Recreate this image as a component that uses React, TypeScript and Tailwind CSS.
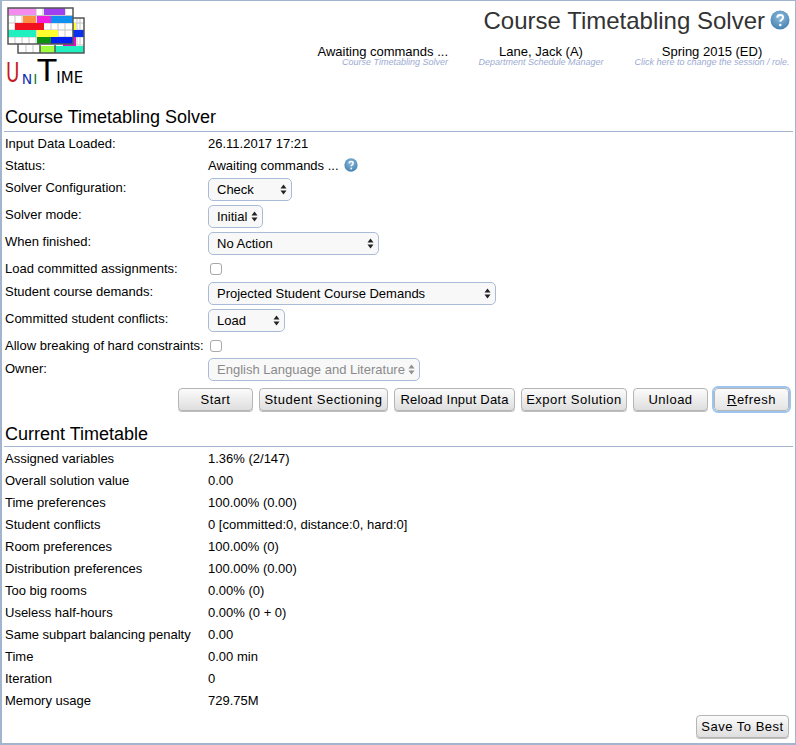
import React, { PropsWithChildren } from "react";

const backBlocks: [number, number, number, number, string][] = [
  [73, 23, 3, 7, "#ffff30"],
  [73, 30, 11, 7, "#0a30f0"],
  [63, 37, 13, 9, "#e010c8"],
];

const frontBlocks: [number, number, number, number, string][] = [
  [8, 8, 28, 7, "#f48cf0"],
  [44, 8, 21, 7, "#a040f0"],
  [23, 16, 13, 7, "#ff9040"],
  [37, 16, 14, 7, "#f020e0"],
  [51, 16, 22, 7, "#1090f0"],
  [15, 23, 29, 7, "#f01020"],
  [8, 30, 28, 7, "#20f0c0"],
  [37, 30, 21, 7, "#ffff30"],
  [37, 37, 14, 7, "#109010"],
  [51, 37, 22, 7, "#0020f0"],
];

const lowerBlocks: [number, number, number, number, string][] = [
  [40, 46, 15, 7, "#a0ff40"],
  [55, 46, 29, 7, "#20f0c0"],
];

function Logo() {
  return (
    <div className="flex w-[82px] flex-col">
      <svg width="82" height="56" viewBox="6 6 82 56" className="block">
        <rect x="18" y="18" width="66" height="35" fill="#fff" />
        <path d="M73 23H84M73 30H84M73 37H84M73 45H84M77 18V45M80 18V45M26 45V53M33 45V53" stroke="#c4c4c4" strokeWidth="1" fill="none" />
        {backBlocks.map(([x, y, w, h, fill], index) => (
          <rect key={index} x={x} y={y} width={w} height={h} fill={fill} />
        ))}
        {lowerBlocks.map(([x, y, w, h, fill], index) => (
          <rect key={index} x={x} y={y} width={w} height={h} fill={fill} />
        ))}
        <path d="M18 44V53H84V18H73M40 45V53M55 45V53" stroke="#555" strokeWidth="1.5" fill="none" />
        <rect x="8" y="8" width="65" height="36" fill="#fff" />
        <path d="M8 15.5H73M8 23H73M8 30H73M8 37H73M15 8V44M22 8V44M29 8V44M36 8V44M43 8V44M51 8V44M58 8V44M65 8V44" stroke="#c4c4c4" strokeWidth="1" fill="none" />
        {frontBlocks.map(([x, y, w, h, fill], index) => (
          <rect key={index} x={x} y={y} width={w} height={h} fill={fill} />
        ))}
        <rect x="8" y="8" width="65" height="36" fill="none" stroke="#555" strokeWidth="1.5" />
      </svg>
      <div className="mt-[-1px] flex h-[25px] items-end font-['DejaVu_Sans',sans-serif] leading-none text-black">
        <span className="mr-[-6px] inline-block origin-left scale-x-[0.68] text-[27px] text-[#c81820]">U</span>
        <span className="ml-[2px] text-[14px] text-[#1030b0]">N</span>
        <span className="ml-[1px] text-[14px] text-[#108030]">I</span>
        <span className="text-[31px]">T</span>
        <span className="text-[15px]">IME</span>
      </div>
    </div>
  );
}

function HelpIcon({ size }: { size: "lg" | "sm" }) {
  const box = size === "lg" ? "h-[20px] w-[20px]" : "h-[14px] w-[14px]";
  return (
    <svg viewBox="0 0 20 20" className={box}>
      <defs>
        <radialGradient id={`help-${size}`} cx="50%" cy="35%" r="70%">
          <stop offset="0%" stopColor="#8fbbdc" />
          <stop offset="100%" stopColor="#3f7fae" />
        </radialGradient>
      </defs>
      <circle cx="10" cy="10" r="9.5" fill={`url(#help-${size})`} />
      <path d="M7.2 7.6c.2-1.7 1.4-2.6 3-2.6 1.7 0 2.9 1 2.9 2.4 0 1.2-.7 1.8-1.5 2.4-.8.6-1.3 1-1.3 2" fill="none" stroke="#fff" strokeWidth="2" />
      <circle cx="10.3" cy="15" r="1.3" fill="#fff" />
    </svg>
  );
}

function HeaderInfo({ title, sub, align }: { title: string; sub: string; align: string }) {
  return (
    <div className={`flex flex-col ${align}`}>
      <div className="whitespace-nowrap text-[13px] leading-[12px] text-black">{title}</div>
      <div className="whitespace-nowrap text-[9px] italic leading-[8px] text-[#9dabd2]">{sub}</div>
    </div>
  );
}

function SectionTitle({ children, pad }: PropsWithChildren<{ pad: string }>) {
  return (
    <div className={`ml-[2px] mr-[2px] border-b border-[#a3b4cf] ${pad} pl-[1px] text-[18px] leading-[21px] text-black`}>
      {children}
    </div>
  );
}

function Row({ label, height, children, top = "pt-[3px]" }: PropsWithChildren<{ label: string; height: string; top?: string }>) {
  return (
    <div className={`flex ${height}`}>
      <div className="w-[203px] shrink-0 pt-[3px] leading-[15px]">{label}</div>
      <div className={`flex items-start ${top} leading-[15px]`}>{children}</div>
    </div>
  );
}

function Select({ value, width, disabled }: { value: string; width: string; disabled?: boolean }) {
  return (
    <div className={`relative ${width}`}>
      <select
        disabled={disabled}
        defaultValue={value}
        className={`h-[23px] w-full appearance-none rounded-[5px] border border-[#a9bbd6] bg-[#f8f8f8] pl-[8px] text-[13px] leading-[15px] ${disabled ? "text-[#8a8a8a]" : "text-black"}`}
      >
        <option>{value}</option>
      </select>
      <svg viewBox="0 0 7 11" className="absolute right-[5px] top-[6px] h-[11px] w-[7px]">
        <path d="M3.5 0.5L6.5 4.5H0.5ZM3.5 10.5L0.5 6.5H6.5Z" fill={disabled ? "#909090" : "#222"} />
      </svg>
    </div>
  );
}

function Checkbox() {
  return <input type="checkbox" className="ml-[2px] mt-[2px] h-[12px] w-[12px] appearance-none rounded-[3px] border border-[#a8a8a8] bg-white" />;
}

function Btn({ children, width, tracking = "tracking-[0.5px]" }: PropsWithChildren<{ width: string; tracking?: string }>) {
  return (
    <button className={`h-[23px] ${width} rounded-[4px] border border-[#b5b5b5] bg-gradient-to-b from-[#fbfbfb] to-[#dedede] text-center text-[13px] leading-[15px] ${tracking} text-black shadow-[0_1px_0_#bdbdbd]`}>
      {children}
    </button>
  );
}

const stats = [
  ["Assigned variables", "1.36% (2/147)"],
  ["Overall solution value", "0.00"],
  ["Time preferences", "100.00% (0.00)"],
  ["Student conflicts", "0 [committed:0, distance:0, hard:0]"],
  ["Room preferences", "100.00% (0)"],
  ["Distribution preferences", "100.00% (0.00)"],
  ["Too big rooms", "0.00% (0)"],
  ["Useless half-hours", "0.00% (0 + 0)"],
  ["Same subpart balancing penalty", "0.00"],
  ["Time", "0.00 min"],
  ["Iteration", "0"],
  ["Memory usage", "729.75M"],
];

export default function App() {
  return (
    <div className="flex h-[745px] w-[796px] flex-col overflow-hidden border-b-2 border-l-2 border-r border-t border-[#a3b4cf] bg-white font-['Liberation_Sans',sans-serif] text-[13px] text-black">
      <div className="flex h-[92px] shrink-0 justify-between pl-[4px] pr-[5px] pt-[5px]">
        <Logo />
        <div className="flex flex-col items-end">
          <div className="mt-[2px] flex h-[26px] items-center gap-[5px]">
            <span className="text-[24px] leading-[26px] text-[#333]">Course Timetabling Solver</span>
            <span className="mt-[-3px]"><HelpIcon size="lg" /></span>
          </div>
          <div className="mt-[12px] flex gap-[30px]">
            <div className="w-[132px]"><HeaderInfo title="Awaiting commands ..." sub="Course Timetabling Solver" align="items-end" /></div>
            <div className="w-[126px]"><HeaderInfo title="Lane, Jack (A)" sub="Department Schedule Manager" align="items-center" /></div>
            <div className="w-[156px]"><HeaderInfo title="Spring 2015 (ED)" sub="Click here to change the session / role." align="items-center" /></div>
          </div>
        </div>
      </div>
      <div className="shrink-0 pt-[14px]">
        <SectionTitle pad="pb-[3px]">Course Timetabling Solver</SectionTitle>
      </div>
      <div className="pl-[3px] pt-[1px]">
        <Row label="Input Data Loaded:" height="h-[22px]">26.11.2017 17:21</Row>
        <Row label="Status:" height="h-[22px]">
          <span>Awaiting commands ...</span>
          <span className="ml-[5px]"><HelpIcon size="sm" /></span>
        </Row>
        <Row label="Solver Configuration:" height="h-[27px]" top="pt-[1px]"><Select value="Check" width="w-[84px]" /></Row>
        <Row label="Solver mode:" height="h-[27px]" top="pt-[1px]"><Select value="Initial" width="w-[55px]" /></Row>
        <Row label="When finished:" height="h-[27px]" top="pt-[1px]"><Select value="No Action" width="w-[171px]" /></Row>
        <Row label="Load committed assignments:" height="h-[23px]"><Checkbox /></Row>
        <Row label="Student course demands:" height="h-[27px]" top="pt-[1px]"><Select value="Projected Student Course Demands" width="w-[288px]" /></Row>
        <Row label="Committed student conflicts:" height="h-[27px]" top="pt-[1px]"><Select value="Load" width="w-[77px]" /></Row>
        <Row label="Allow breaking of hard constraints:" height="h-[23px]"><Checkbox /></Row>
        <Row label="Owner:" height="h-[27px]" top="pt-0"><Select value="English Language and Literature" width="w-[212px]" disabled /></Row>
      </div>
      <div className="flex justify-end gap-[6px] pr-[6px] pt-[3px]">
        <Btn width="w-[75px]">Start</Btn>
        <Btn width="w-[129px]">Student Sectioning</Btn>
        <Btn width="w-[121px]" tracking="tracking-[0.2px]">Reload Input Data</Btn>
        <Btn width="w-[106px]">Export Solution</Btn>
        <Btn width="w-[75px]">Unload</Btn>
        <button className="h-[23px] w-[75px] rounded-[4px] border border-[#b5b5b5] bg-gradient-to-b from-[#fbfbfb] to-[#e4e4e4] text-center text-[13px] leading-[15px] tracking-[0.5px] text-black outline-2 outline-[#9cc4ee]">
          <span className="underline">R</span>efresh
        </button>
      </div>
      <div className="shrink-0 pt-[13px]">
        <SectionTitle pad="pb-[1px]">Current Timetable</SectionTitle>
      </div>
      <div className="pl-[3px] pt-[1px]">
        {stats.map(([label, value]) => (
          <Row key={label} label={label} height="h-[22px]">{value}</Row>
        ))}
      </div>
      <div className="flex justify-end pr-[6px] pt-[3px]">
        <Btn width="w-[93px]">Save To Best</Btn>
      </div>
    </div>
  );
}
